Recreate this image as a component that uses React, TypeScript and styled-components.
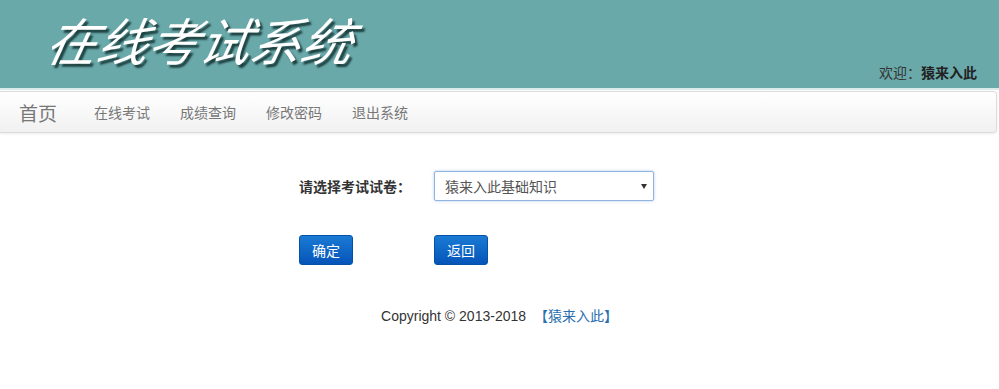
import React from 'react'
import styled, { createGlobalStyle } from 'styled-components'

const GlobalStyle = createGlobalStyle`
    html, body {
        margin: 0;
        padding: 0;
        background: #fff;
        font-family: "Liberation Sans", Arial, "Noto Sans CJK SC", sans-serif;
        font-size: 14px;
        color: #333;
    }
`

const Page = styled.div`
    width: 999px;
`

const Banner = styled.div`
    height: 88px;
    background: #6aa9aa;
    display: flex;
    justify-content: space-between;
    align-items: flex-end;
    border-bottom: 2px solid #d9ebeb;
`

const Title = styled.h1`
    margin: 0 0 10px 48px;
    align-self: center;
    font-family: "Noto Sans CJK SC", sans-serif;
    font-weight: 400;
    font-style: italic;
    font-size: 51px;
    line-height: 58px;
    color: #fff;
    text-shadow: 3px 3px 2px #1d3f3f;
    transform: skewX(-12deg);
`

const Welcome = styled.div`
    margin: 0 22px 6px 0;
    font-size: 14px;
    color: #333;

    b {
        color: #222;
    }
`

const NavBar = styled.nav`
    margin: 1px 2px 0 0;
    height: 40px;
    display: flex;
    align-items: center;
    background: linear-gradient(to bottom, #ffffff 0%, #f1f1f1 100%);
    border: 1px solid #dcdcdc;
    border-left: none;
    border-radius: 0 4px 4px 0;
    box-shadow: 0 1px 3px rgba(0, 0, 0, 0.08);
`

const Brand = styled.a`
    margin-left: 19px;
    margin-right: 22px;
    font-size: 19px;
    color: #777;
    text-decoration: none;
`

const NavLink = styled.a`
    padding: 0 15px;
    font-size: 14px;
    color: #777;
    text-decoration: none;
`

const Form = styled.div`
    padding: 38px 0 0 299px;
    display: flex;
    flex-direction: column;
    gap: 34px;
`

const Row = styled.div`
    display: flex;
    align-items: center;
`

const Label = styled.label`
    width: 135px;
    font-weight: bold;
    font-size: 14px;
    color: #333;
`

const Select = styled.div`
    position: relative;
    width: 220px;
    height: 30px;
    box-sizing: border-box;
    border: 1px solid #8fb4e0;
    border-radius: 2px;
    box-shadow: 0 0 3px rgba(102, 150, 220, 0.5);
    padding-left: 10px;
    display: flex;
    align-items: center;
    font-size: 14px;
    color: #555;

    &::after {
        content: '';
        position: absolute;
        right: 6px;
        top: 12px;
        border-left: 3px solid transparent;
        border-right: 3px solid transparent;
        border-top: 5px solid #333;
    }
`

const Button = styled.button<{ $gap?: number }>`
    width: 54px;
    height: 30px;
    margin-right: ${p => p.$gap || 0}px;
    border: 1px solid #0452a8;
    border-radius: 3px;
    background: linear-gradient(to bottom, #1a7ad4 0%, #0555b8 100%);
    color: #fff;
    font-family: inherit;
    font-size: 14px;
    padding: 0;
`

const Footer = styled.div`
    margin-top: 40px;
    text-align: center;
    font-size: 14px;
    color: #333;

    a {
        color: #2a6fb0;
        text-decoration: none;
        margin-left: 4px;
    }
`

export default function App() {
    return (
        <Page>
            <GlobalStyle />
            <Banner>
                <Title>在线考试系统</Title>
                <Welcome>欢迎：<b>猿来入此</b></Welcome>
            </Banner>
            <NavBar>
                <Brand href="#">首页</Brand>
                <NavLink href="#">在线考试</NavLink>
                <NavLink href="#">成绩查询</NavLink>
                <NavLink href="#">修改密码</NavLink>
                <NavLink href="#">退出系统</NavLink>
            </NavBar>
            <Form>
                <Row>
                    <Label>请选择考试试卷：</Label>
                    <Select>猿来入此基础知识</Select>
                </Row>
                <Row>
                    <Button $gap={81}>确定</Button>
                    <Button>返回</Button>
                </Row>
            </Form>
            <Footer>
                Copyright © 2013-2018 <a href="#">【猿来入此】</a>
            </Footer>
        </Page>
    )
}
